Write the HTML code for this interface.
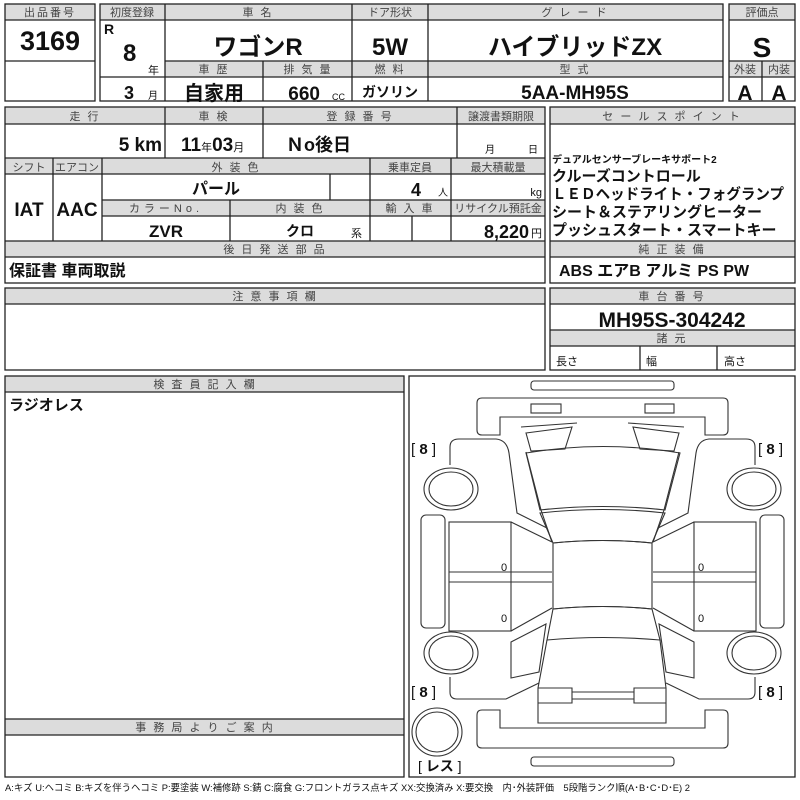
<!DOCTYPE html>
<html><head><meta charset="utf-8"><style>
html,body{margin:0;padding:0;background:#fff;width:800px;height:800px;overflow:hidden}
svg{display:block}
text{font-family:"Liberation Sans","Noto Sans CJK JP",sans-serif;fill:#111}
.h{font-size:11px;fill:#444;text-anchor:middle;letter-spacing:2px}
.b{font-weight:bold}
.m{text-anchor:middle}
.e{text-anchor:end}
</style></head><body>
<svg width="800" height="800" viewBox="0 0 800 800">
<g fill="#dcdcdc" stroke="none">
<rect x="5" y="4" width="90" height="16"/>
<rect x="100" y="4" width="623" height="16"/>
<rect x="165" y="61" width="558" height="16"/>
<rect x="729" y="4" width="66" height="16"/>
<rect x="729" y="61" width="66" height="16"/>
<rect x="5" y="107" width="540" height="17"/>
<rect x="5" y="158" width="540" height="16"/>
<rect x="102" y="200" width="443" height="16"/>
<rect x="5" y="241" width="540" height="16"/>
<rect x="550" y="107" width="245" height="17"/>
<rect x="550" y="241" width="245" height="16"/>
<rect x="5" y="288" width="540" height="16"/>
<rect x="550" y="288" width="245" height="16"/>
<rect x="550" y="330" width="245" height="16"/>
<rect x="5" y="376" width="399" height="16"/>
<rect x="5" y="719" width="399" height="16"/>
</g>
<g fill="none" stroke="#222" stroke-width="1.3">
<rect x="5" y="4" width="90" height="97"/>
<path d="M5 20H95M5 61H95"/>
<rect x="100" y="4" width="623" height="97"/>
<path d="M100 20H723M165 61H723M165 77H723M100 77H165M165 4V101M352 4V101M428 4V101M263 61V101"/>
<rect x="729" y="4" width="66" height="97"/>
<path d="M729 20H795M729 61H795M729 77H795M762 61V101"/>
<rect x="5" y="107" width="540" height="176"/>
<path d="M5 124H545M5 158H545M5 174H545M102 200H545M102 216H545M5 241H545M5 257H545"/>
<path d="M165 107V158M263 107V158M457 107V158M53 158V241M102 158V241M370 158V241M451 158V241M330 174V200M230 200V241M412 216V241"/>
<rect x="550" y="107" width="245" height="176"/>
<path d="M550 124H795M550 241H795M550 257H795"/>
<rect x="5" y="288" width="540" height="82"/>
<path d="M5 304H545"/>
<rect x="550" y="288" width="245" height="82"/>
<path d="M550 304H795M550 330H795M550 346H795M640 346V370M717 346V370"/>
<rect x="5" y="376" width="399" height="401"/>
<path d="M5 392H404M5 719H404M5 735H404"/>
<rect x="409" y="376" width="386" height="401"/>
</g>
<g fill="none" stroke="#333" stroke-width="1.1">
<rect x="531" y="381" width="143" height="9" rx="3"/>
<rect x="531" y="757" width="143" height="9" rx="3"/>
<path d="M482 398H723Q728 398 728 403V430Q728 435 723 435H705V417H500V435H482Q477 435 477 430V403Q477 398 482 398Z"/>
<path d="M482 710H500V728H705V710H723Q728 710 728 715V743Q728 748 723 748H482Q477 748 477 743V715Q477 710 482 710Z"/>
<rect x="531" y="404" width="30" height="9"/><rect x="645" y="404" width="29" height="9"/>
<path d="M526 453Q603 440 680 453L665 510Q603 503 540 510Z"/>
<path d="M540 513Q603 506 665 513L652 543Q603 538 553 543Z"/>
<path d="M553 543Q603 538 652 543V609Q603 604 553 609Z"/>
<path d="M553 609Q603 604 652 609L660 640Q603 635 547 640Z"/>
<path d="M547 640L538 688V723H666V688L660 640"/>
<path d="M538 688H572V703H538M666 688H634V703H666M572 692H634M572 699H634"/>
<g id="L">
<path d="M526 433L572 427L565 449L531 451Z"/>
<path d="M521 427L577 423"/>
<path d="M450 465V447Q450 439 459 439H496Q507 440 509 453L517 513L547 528L552 542"/>
<path d="M526 452L541 510L552 542"/>
<rect x="449" y="522" width="62" height="109"/>
<path d="M449 572H552M449 582H552M511 522L552 542M511 631L552 608"/>
<path d="M511 642L546 624L539 672L511 678Z"/>
<path d="M450 677V692Q450 699 457 699H506L539 683"/>
<ellipse cx="451" cy="489" rx="27" ry="21"/><ellipse cx="451" cy="489" rx="22" ry="17"/>
<ellipse cx="451" cy="653" rx="27" ry="21"/><ellipse cx="451" cy="653" rx="22" ry="17"/>
<rect x="421" y="515" width="24" height="113" rx="5"/>
</g>
<use href="#L" transform="translate(1205 0) scale(-1 1)"/>
<ellipse cx="437" cy="732" rx="25" ry="24"/><ellipse cx="437" cy="732" rx="21" ry="20"/>
</g>
<g font-size="11">
<text class="h" x="50" y="16">出品番号</text>
<text class="h" x="132" y="16" style="letter-spacing:0">初度登録</text>
<text class="h" x="258" y="16">車 名</text>
<text class="h" x="390" y="16" style="letter-spacing:0">ドア形状</text>
<text class="h" x="575" y="16">グ レ ー ド</text>
<text class="h" x="762" y="16" style="letter-spacing:0">評価点</text>
<text class="h" x="214" y="73">車 歴</text>
<text class="h" x="308" y="73">排 気 量</text>
<text class="h" x="390" y="73">燃 料</text>
<text class="h" x="575" y="73">型 式</text>
<text class="h" x="745" y="73" style="letter-spacing:0">外装</text>
<text class="h" x="779" y="73" style="letter-spacing:0">内装</text>
<text class="h" x="85" y="120">走 行</text>
<text class="h" x="214" y="120">車 検</text>
<text class="h" x="360" y="120">登 録 番 号</text>
<text class="h" x="501" y="120" style="letter-spacing:0">譲渡書類期限</text>
<text class="h" x="29" y="171" style="letter-spacing:0">シフト</text>
<text class="h" x="77" y="171" style="letter-spacing:0">エアコン</text>
<text class="h" x="236" y="171">外 装 色</text>
<text class="h" x="410" y="171" style="letter-spacing:0">乗車定員</text>
<text class="h" x="498" y="171" style="letter-spacing:0">最大積載量</text>
<text class="h" x="166" y="212" style="letter-spacing:4px">カラーNo.</text>
<text class="h" x="300" y="212">内 装 色</text>
<text class="h" x="410" y="212">輸 入 車</text>
<text class="h" x="498" y="212" style="letter-spacing:0">リサイクル預託金</text>
<text class="h" x="275" y="253">後 日 発 送 部 品</text>
<text class="h" x="672" y="120">セ ー ル ス ポ イ ン ト</text>
<text class="h" x="672" y="253">純 正 装 備</text>
<text class="h" x="275" y="300">注 意 事 項 欄</text>
<text class="h" x="672" y="300">車 台 番 号</text>
<text class="h" x="672" y="342">諸 元</text>
<text class="h" x="205" y="388">検 査 員 記 入 欄</text>
<text class="h" x="205" y="731">事 務 局 よ り ご 案 内</text>
</g>
<text class="b m" x="50" y="50" font-size="27">3169</text>
<text class="b" x="104" y="34" font-size="14">R</text>
<text class="b" x="123" y="61" font-size="24">8</text>
<text x="148" y="74" font-size="11">年</text>
<text class="b" x="124" y="99" font-size="18">3</text>
<text x="148" y="99" font-size="10">月</text>
<text class="b m" x="258" y="55" font-size="24">ワゴンR</text>
<text class="b m" x="390" y="55" font-size="24">5W</text>
<text class="b m" x="575" y="55" font-size="24">ハイブリッドZX</text>
<text class="b m" x="762" y="57" font-size="28">S</text>
<text class="b m" x="214" y="100" font-size="20">自家用</text>
<text class="b e" x="320" y="100" font-size="19">660</text>
<text x="332" y="100" font-size="9">CC</text>
<text class="b m" x="390" y="97" font-size="14">ガソリン</text>
<text class="b m" x="575" y="99" font-size="19">5AA-MH95S</text>
<text class="b m" x="745" y="100" font-size="21">A</text>
<text class="b m" x="779" y="100" font-size="21">A</text>
<text class="b e" x="162" y="151" font-size="19">5 km</text>
<text class="b" x="181" y="151" font-size="19">11<tspan font-size="11" font-weight="normal">年</tspan>03<tspan font-size="11" font-weight="normal">月</tspan></text>
<text class="b" x="286" y="151" font-size="18">Ｎo後日</text>
<text x="485" y="153" font-size="10">月</text>
<text x="528" y="153" font-size="10">日</text>
<text class="b m" x="29" y="216" font-size="19">IAT</text>
<text class="b m" x="77" y="216" font-size="19">AAC</text>
<text class="b m" x="216" y="194" font-size="16">パール</text>
<text class="b" x="411" y="196" font-size="18">4</text>
<text x="438" y="196" font-size="10">人</text>
<text class="e" x="542" y="196" font-size="11">kg</text>
<text class="b m" x="166" y="237" font-size="17">ZVR</text>
<text class="b m" x="300" y="236" font-size="14">クロ</text>
<text x="351" y="237" font-size="11">系</text>
<text class="b e" x="529" y="238" font-size="18">8,220</text>
<text x="531" y="237" font-size="11">円</text>
<text class="b" x="9" y="276" font-size="16">保証書 車両取説</text>
<text class="b" x="552" y="163" font-size="10">デュアルセンサーブレーキサポート2</text>
<text class="b" x="552" y="181" font-size="15">クルーズコントロール</text>
<text class="b" x="552" y="199" font-size="15" textLength="232" lengthAdjust="spacingAndGlyphs">ＬＥＤヘッドライト・フォグランプ</text>
<text class="b" x="552" y="217" font-size="15">シート＆ステアリングヒーター</text>
<text class="b" x="552" y="235" font-size="15">プッシュスタート・スマートキー</text>
<text class="b" x="559" y="276" font-size="16">ABS エアB アルミ PS PW</text>
<text class="b m" x="672" y="327" font-size="21">MH95S-304242</text>
<text x="556" y="365" font-size="11">長さ</text>
<text x="646" y="365" font-size="11">幅</text>
<text x="724" y="365" font-size="11">高さ</text>
<text class="b" x="9" y="410" font-size="15">ラジオレス</text>
<g font-size="15">
<text x="411" y="454">[ <tspan font-weight="bold">8</tspan> ]</text>
<text x="758" y="454">[ <tspan font-weight="bold">8</tspan> ]</text>
<text x="411" y="697">[ <tspan font-weight="bold">8</tspan> ]</text>
<text x="758" y="697">[ <tspan font-weight="bold">8</tspan> ]</text>
<text x="418" y="771" font-size="14">[ <tspan font-weight="bold">レス</tspan> ]</text>
</g>
<g font-size="11" fill="#333">
<text x="501" y="571">0</text><text x="501" y="622">0</text>
<text x="698" y="571">0</text><text x="698" y="622">0</text>
</g>
<text x="5" y="791" font-size="9.5" fill="#333" textLength="685" lengthAdjust="spacingAndGlyphs">A:キズ U:ヘコミ B:キズを伴うヘコミ P:要塗装 W:補修跡 S:錆 C:腐食 G:フロントガラス点キズ XX:交換済み X:要交換　内･外装評価　5段階ランク順(A･B･C･D･E) 2</text>
</svg>
</body></html>
